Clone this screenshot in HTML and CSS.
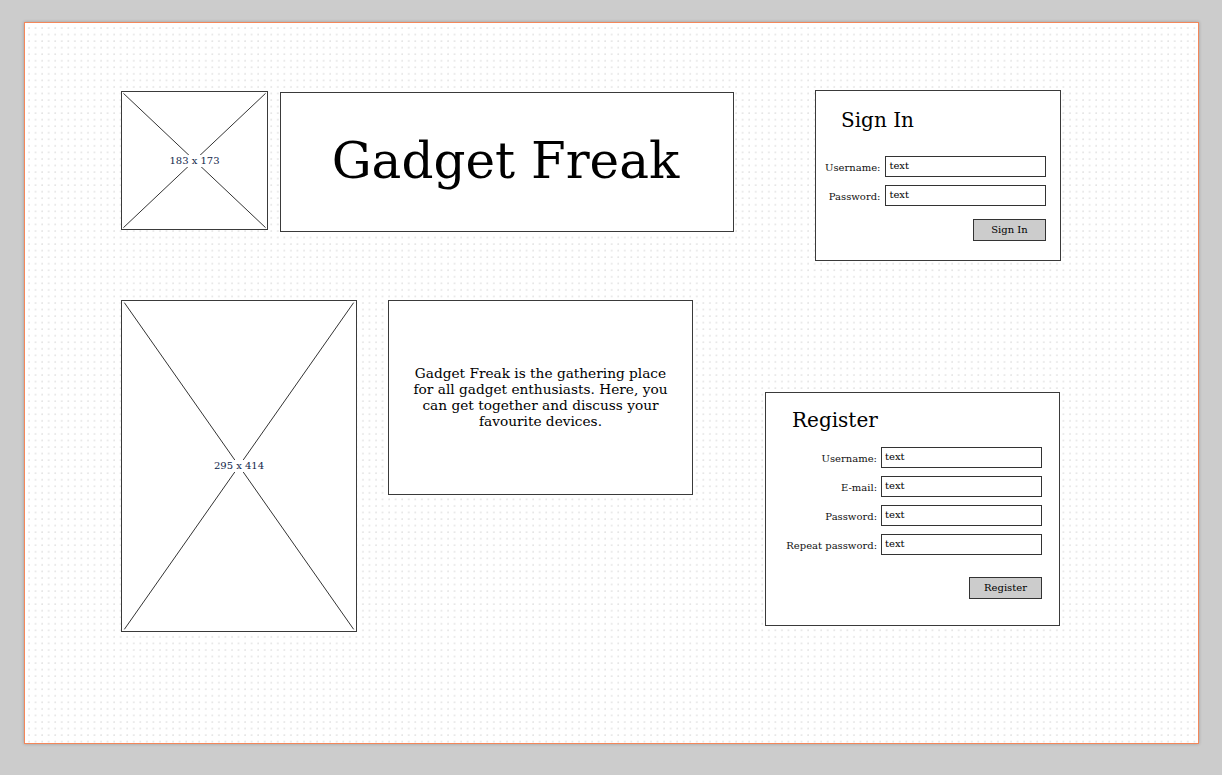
FILE: index.html
```html
<!DOCTYPE html>
<html>
<head>
<meta charset="utf-8">
<link rel="stylesheet" href="styles.css">
</head>
<body>
<div class="canvas">
  <div class="placeholder ph-logo">
    <svg class="cross" viewBox="0 0 100 100" preserveAspectRatio="none"><line x1="1" y1="1" x2="99" y2="99"/><line x1="99" y1="1" x2="1" y2="99"/></svg>
    <span class="ph-label">183 x 173</span>
  </div>

  <div class="box title-box"><h1 class="title">Gadget Freak</h1></div>

  <form class="box panel signin">
    <h2 class="panel-title">Sign In</h2>
    <div class="fields fields-signin">
      <label class="lbl">Username:</label><div class="input">text</div>
      <label class="lbl">Password:</label><div class="input">text</div>
    </div>
    <div class="actions"><div class="btn">Sign In</div></div>
  </form>

  <div class="placeholder ph-photo">
    <svg class="cross" viewBox="0 0 100 100" preserveAspectRatio="none"><line x1="1" y1="0.5" x2="99" y2="99.5"/><line x1="99" y1="0.5" x2="1" y2="99.5"/></svg>
    <span class="ph-label">295 x 414</span>
  </div>

  <div class="box desc">
    <p class="desc-text">Gadget Freak is the gathering place for all gadget enthusiasts. Here, you can get together and discuss your favourite devices.</p>
  </div>

  <form class="box panel register">
    <h2 class="panel-title">Register</h2>
    <div class="fields fields-register">
      <label class="lbl">Username:</label><div class="input">text</div>
      <label class="lbl">E-mail:</label><div class="input">text</div>
      <label class="lbl">Password:</label><div class="input">text</div>
      <label class="lbl">Repeat password:</label><div class="input">text</div>
    </div>
    <div class="actions"><div class="btn">Register</div></div>
  </form>
</div>
</body>
</html>
```

FILE: styles.css
```css
* { box-sizing: border-box; }
html, body { margin: 0; padding: 0; }
body {
  width: 1222px;
  height: 775px;
  background: #cccccc;
  font-family: "DejaVu Serif", "Liberation Serif", serif;
  color: #111;
  padding: 22px 0 0 24px;
}
.canvas {
  position: relative;
  width: 1175px;
  height: 722px;
  border: 1px solid #f3875a;
  background-color: #fff;
  background-image: radial-gradient(circle at 1px 1px, #e4e4e4 0.6px, transparent 0.9px);
  background-size: 6.55px 6.55px;
  background-position: 3px 4px;
  box-shadow: 0 0 3px rgba(0,0,0,0.25);
}
.box, .placeholder {
  position: absolute;
  background: #fff;
  border: 1px solid #3a3a3a;
}
.placeholder { display: flex; align-items: center; justify-content: center; }
.cross { position: absolute; inset: 0; width: 100%; height: 100%; }
.cross line { stroke: #333; stroke-width: 1; vector-effect: non-scaling-stroke; }
.ph-label {
  position: relative;
  font-size: 10px;
  line-height: 12px;
  background: #fff;
  color: #10264a;
  padding: 0 1px;
}
.ph-logo { left: 96px; top: 68px; width: 147px; height: 139px; }
.ph-photo { left: 96px; top: 277px; width: 236px; height: 332px; }

.title-box {
  left: 255px; top: 69px; width: 454px; height: 140px;
  display: flex; align-items: center; justify-content: center;
}
.title {
  margin: 0 3px 2px 0;
  font-weight: normal;
  font-size: 50px;
  line-height: 56px;
  color: #000;
}

.desc {
  left: 363px; top: 277px; width: 305px; height: 195px;
  display: flex; align-items: center; justify-content: center;
}
.desc-text {
  margin: 0 0 2px 0;
  width: 262px;
  font-size: 13.7px;
  line-height: 16px;
  text-align: center;
  color: #000;
}

.panel { margin: 0; }
.signin { left: 790px; top: 67px; width: 246px; height: 171px; padding: 16px 14px 0 9px; }
.register { left: 740px; top: 369px; width: 295px; height: 234px; padding: 14px 17px 0 9px; }
.panel-title {
  margin: 0;
  font-weight: normal;
  font-size: 20px;
  line-height: 26px;
  color: #000;
}
.signin .panel-title { padding-left: 16px; }
.register .panel-title { padding-left: 17px; }

.fields {
  display: grid;
  align-items: center;
  column-gap: 4px;
}
.fields-signin { grid-template-columns: 1fr 161px; row-gap: 8px; margin-top: 23px; }
.fields-register { grid-template-columns: 1fr 161px; row-gap: 8px; margin-top: 14px; }
.lbl {
  font-size: 10px;
  line-height: 12px;
  text-align: right;
  color: #111;
  padding-top: 2px;
}
.signin .lbl { padding-right: 1px; }
.input {
  height: 21px;
  border: 1px solid #333;
  background: #fff;
  font-size: 10px;
  line-height: 17px;
  padding: 0 3px;
  color: #000;
}
.actions { display: flex; justify-content: flex-end; }
.signin .actions { margin-top: 13px; }
.register .actions { margin-top: 22px; }
.btn {
  width: 73px;
  height: 22px;
  border: 1px solid #333;
  background: #cccccc;
  font-size: 10px;
  line-height: 20px;
  text-align: center;
  color: #000;
}
```
